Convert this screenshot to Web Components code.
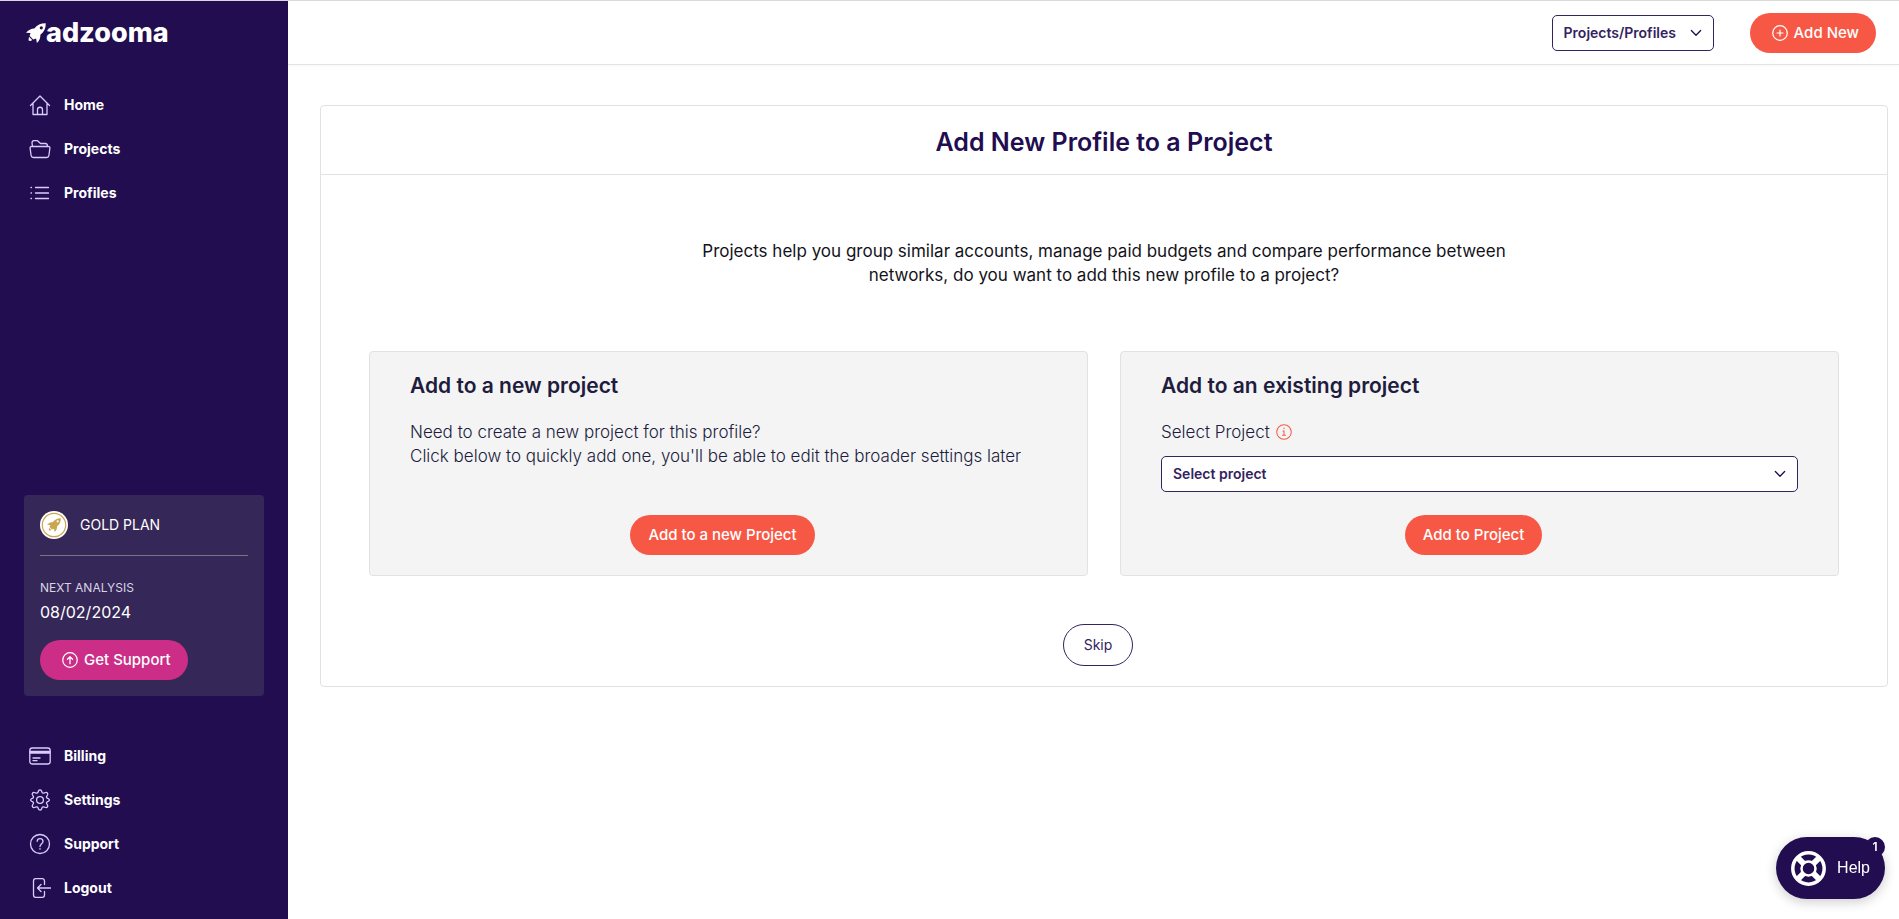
<!DOCTYPE html>
<html lang="en">
<head>
<meta charset="utf-8">
<meta name="viewport" content="width=device-width, initial-scale=1">
<title>Adzooma</title>
<style>
  :root {
    --navy: #210d4f;
    --ink: #33235e;
    --coral: #f75845;
    --pink: #cc2e87;
    --line: #e2e2e5;
  }
  body {
    margin: 0;
    background: #fff;
    color: #211c3d;
    font: 400 16px/24px Inter, "Open Sans", sans-serif;
  }
</style>
</head>
<body>
<app-shell>
  <side-bar slot="side">
    <nav-item icon="home" href="#home">Home</nav-item>
    <nav-item icon="folder" href="#projects">Projects</nav-item>
    <nav-item icon="list" href="#profiles">Profiles</nav-item>
    <plan-card slot="plan" plan="GOLD PLAN" date="08/02/2024"></plan-card>
    <nav-item slot="foot" icon="card" href="#billing">Billing</nav-item>
    <nav-item slot="foot" icon="gear" href="#settings">Settings</nav-item>
    <nav-item slot="foot" icon="question" href="#support">Support</nav-item>
    <nav-item slot="foot" icon="logout" href="#logout">Logout</nav-item>
  </side-bar>
  <top-bar slot="top">
    <select-field name="Projects or profiles" value="Projects/Profiles"></select-field>
    <pill-button icon="plus">Add New</pill-button>
  </top-bar>
  <profile-panel heading="Add New Profile to a Project">
    <span slot="intro">Projects help you group similar accounts, manage paid budgets and compare performance between networks, do you want to add this new profile to a project?</span>
    <option-card heading="Add to a new project">
      <span>Need to create a new project for this profile?<br>Click below to quickly add one, you'll be able to edit the broader settings later</span>
      <pill-button slot="action">Add to a new Project</pill-button>
    </option-card>
    <option-card heading="Add to an existing project">
      <select-field label="Select Project" value="Select project"></select-field>
      <pill-button slot="action">Add to Project</pill-button>
    </option-card>
    <pill-button slot="skip" variant="outline">Skip</pill-button>
  </profile-panel>
</app-shell>
<help-launcher count="1">Help</help-launcher>

<script>
const ROCKET = '<path fill-rule="evenodd" d="M19.800.2C14.500.2 11 2 8.300 5.600 5 5.800 2.300 7.200 0 9.800l4.600.1-1 2.900 3.600 3.600 2.900-1 .8 4.600c2.500-2.400 3.700-5 3.500-8.300C18 9 19.800 5.500 19.800.2ZM15.300 3.200a1.600 1.600 0 1 0 0 3.200 1.600 1.600 0 0 0 0-3.200ZM3 13.800 6.200 17l-1.600 1-2.100-.5Z"/>';

const ICONS = {
  home: '<path d="M1.500 11.500 11 2l9.500 9.500M4 9.500V20.500h4.500v-5c0-3 5-3 5 0v5H18V9.500M8.500 20.500h5"/>',
  folder: '<path d="M3.500 8.500 3 5c0-1.500.8-2.300 2-2.300h3.500l3 2.800h5c1.500 0 2 .8 2 3M2.500 8.500h17c.9 0 1.500.6 1.400 1.500l-1 7.500c-.2 1.300-1 2-2.300 2H4.400c-1.300 0-2.100-.7-2.300-2L1.100 10c-.1-.9.500-1.500 1.400-1.500Z"/>',
  list: '<path d="M6.500 5.500h13M6.500 11h13M6.500 16.500h13M2 5.500h.5M2 11h.5M2 16.500h.5"/>',
  card: '<rect x=".8" y="3" width="20.400" height="16" rx="2.500"/><path d="M1 6.500h20M1 8h20M4 13h7M4 15.700h4"/>',
  gear: '<circle cx="11" cy="11" r="3.400"/><path d="m9.300 2.600.3-.9c.4-1 2.400-1 2.800 0l.6 1.600c.3.700 1 1 1.700.8l1.900-.6c1.400-.4 2.600 1 2 2.200l-1 1.800c-.3.600 0 1.300.6 1.600l1.300.7c1.100.6 1.100 1.800 0 2.400l-1.300.7c-.6.300-.9 1-.6 1.600l1 1.800c.6 1.200-.6 2.600-2 2.200l-1.900-.6c-.7-.2-1.400.100-1.700.8l-.6 1.600c-.4 1-2.400 1-2.800 0L9 18.700c-.3-.7-1-1-1.700-.8l-1.900.6c-1.400.4-2.600-1-2-2.200l1-1.800c.3-.6 0-1.300-.6-1.600l-1.300-.7c-1.100-.6-1.100-1.800 0-2.400l1.300-.7c.6-.3.900-1 .6-1.600l-1-1.800c-.6-1.200.6-2.600 2-2.200l1.900.6c.7.2 1.400-.100 1.700-.8Z"/>',
  question: '<circle cx="11" cy="11" r="9.500"/><path d="M8.200 8.300c.2-3.600 5.800-3.300 5.800.1 0 2.200-3 2.400-3 5.100M11 15.600v.6"/>',
  logout: '<path d="M15.500 7.500V4c0-1.400-.8-2.300-2.200-2.300H6.700C5.300 1.700 4.500 2.600 4.500 4v14c0 1.400.8 2.300 2.200 2.300h6.600c1.400 0 2.200-.9 2.200-2.300v-3.500M21.500 11H8.500M12 7.500 8.500 11l3.500 3.500"/>',
  plus: '<circle cx="11" cy="11" r="10"/><path d="M11 7v8M7 11h8"/>',
  up: '<circle cx="11" cy="11" r="10"/><path d="M11 16V6.500M7.500 10 11 6.500l3.500 3.500"/>',
  info: '<circle cx="11" cy="11" r="10"/><path d="M9.500 9.500H11V15M9 15.500h4M11 5.500v1"/>',
  chevron: '<path d="m2.500 6.500 8.500 8.500 8.500-8.500"/>'
};

const define = (name, render) => customElements.define(name, class extends HTMLElement {
  connectedCallback() {
    if (this.shadowRoot) return;
    const template = document.createElement('template');
    template.innerHTML = render(this);
    this.attachShadow({ mode: 'open' }).append(template.content.cloneNode(true));
  }
});
const attr = (el, name) => el.getAttribute(name) || '';

define('ui-icon', el => `
  <style>
    :host { display: inline-flex; width: 22px; height: 22px; flex: none; }
    svg { width: 100%; height: 100%; fill: none; stroke: currentColor; stroke-width: var(--stroke, 1.3);
          stroke-linecap: round; stroke-linejoin: round; }
  </style>
  <svg viewBox="0 0 22 22" aria-hidden="true">${ICONS[attr(el, 'name')]}</svg>`);

define('app-shell', () => `
  <style>
    :host { display: grid; grid-template-columns: 288px minmax(0, 1fr); min-height: 100vh;
            box-sizing: border-box; border-top: 1px solid #dadada; }
    .page { display: flex; flex-direction: column; }
    main { padding: 40px 11px 40px 32px; }
  </style>
  <slot name="side"></slot>
  <div class="page"><slot name="top"></slot><main><slot></slot></main></div>`);

define('side-bar', () => `
  <style>
    :host { display: flex; flex-direction: column; background: var(--navy); color: #fff; padding-bottom: 9px; }
    .logo { display: flex; align-items: center; height: 64px; padding-left: 26px; color: #fff;
            text-decoration: none; font-size: 27px; font-weight: 800; }
    .logo svg { width: 20px; height: 20px; fill: #fff; }
    nav { display: flex; flex-direction: column; }
    .main { margin-top: 18px; }
    .plan { margin: auto 24px 38px; padding-top: 24px; }
  </style>
  <a class="logo" href="#home"><svg viewBox="0 0 20 20" aria-hidden="true">${ROCKET}</svg><span>adzooma</span></a>
  <nav class="main" aria-label="Main"><slot></slot></nav>
  <div class="plan"><slot name="plan"></slot></div>
  <nav aria-label="Account"><slot name="foot"></slot></nav>`);

define('nav-item', el => `
  <style>
    :host { display: block; }
    a { display: flex; align-items: center; gap: 13px; height: 44px; padding-left: 29px;
        color: #fff; text-decoration: none; font-size: 14px; font-weight: 700; }
    ui-icon { color: #d9ccff; }
  </style>
  <a href="${attr(el, 'href')}"><ui-icon name="${attr(el, 'icon')}"></ui-icon><slot></slot></a>`);

define('plan-card', el => `
  <style>
    :host { display: block; padding: 16px; border-radius: 4px; background: #362759; color: #fff; }
    .head { display: flex; align-items: center; gap: 12px; height: 28px; padding-bottom: 16px;
            border-bottom: 1px solid #797585; font-size: 14px; }
    .head svg { width: 28px; height: 28px; }
    .label { margin-top: 20px; font-size: 12px; color: #d9d5e2; }
    .date { margin-bottom: 16px; }
  </style>
  <div class="head">
    <svg viewBox="0 0 28 28" aria-hidden="true"><circle cx="14" cy="14" r="14" fill="#fff"/>
      <circle cx="14" cy="14" r="11.700" fill="none" stroke="#c9a64f" stroke-width="1.200"/>
      <g fill="#c9a64f" transform="translate(7 7) scale(.7)">${ROCKET}</g></svg>
    <span>${attr(el, 'plan')}</span>
  </div>
  <div class="label">NEXT ANALYSIS</div>
  <div class="date">${attr(el, 'date')}</div>
  <pill-button variant="pink" icon="up">Get Support</pill-button>`);

define('pill-button', el => `
  <style>
    :host { display: inline-flex; }
    button { display: inline-flex; align-items: center; gap: 6px; height: 40px; padding: 0 18px;
             border: 0; border-radius: 21px; background: var(--coral); color: #fff;
             font: inherit; font-size: 15px; font-weight: 500; white-space: nowrap; cursor: pointer; }
    button.icon { padding-left: 22px; padding-right: 17px; }
    button.pink { background: var(--pink); }
    button.outline { height: 42px; padding: 0 20px; border: 1px solid var(--ink); background: #fff;
                     color: var(--ink); font-size: 14px; font-weight: 400; }
    ui-icon { width: 16px; height: 16px; --stroke: 1.7; }
  </style>
  <button type="button" class="${attr(el, 'variant')} ${el.hasAttribute('icon') ? 'icon' : ''}">
    ${el.hasAttribute('icon') ? `<ui-icon name="${attr(el, 'icon')}"></ui-icon>` : ''}<slot></slot></button>`);

define('select-field', el => `
  <style>
    :host { display: block; }
    .label { display: flex; align-items: center; gap: 6px; margin-bottom: 12px; }
    .label ui-icon { width: 16px; height: 16px; color: var(--coral); --stroke: 1.4; }
    .box { display: grid; align-items: center; }
    .box > * { grid-area: 1 / 1; }
    .box ui-icon { justify-self: end; width: 12px; height: 12px; margin-right: 12px; pointer-events: none;
                   color: var(--navy); --stroke: 2.4; }
    select { appearance: none; width: 100%; height: 36px; padding: 0 36px 0 11px; border: 1px solid var(--ink);
             border-radius: 5px; background: #fff; color: var(--ink); font: inherit; font-size: 14px; font-weight: 600; }
  </style>
  ${el.hasAttribute('label') ? `<div class="label"><label for="field">${attr(el, 'label')}</label><ui-icon name="info"></ui-icon></div>` : ''}
  <div class="box">
    <select id="field" ${el.hasAttribute('name') ? `aria-label="${attr(el, 'name')}"` : ''}><option>${attr(el, 'value')}</option></select>
    <ui-icon name="chevron"></ui-icon>
  </div>`);

define('top-bar', () => `
  <style>
    :host { display: flex; align-items: center; justify-content: flex-end; gap: 36px; height: 63px;
            padding-right: 23px; border-bottom: 1px solid #e3e2ea; box-shadow: 0 1px 3px #0000000a; }
  </style>
  <slot></slot>`);

define('profile-panel', el => `
  <style>
    :host { display: block; border: 1px solid var(--line); border-radius: 4px; }
    h1 { margin: 0; padding: 18px 16px 14px; border-bottom: 1px solid var(--line); color: var(--navy);
         font-size: 25px; line-height: 36px; font-weight: 600; text-align: center; }
    .body { padding: 64px 48px 20px; }
    p { max-width: 820px; margin: 0 auto 64px; text-align: center; color: #14131a; font-size: 17px; }
    .options { display: grid; grid-template-columns: 1fr 1fr; gap: 32px; }
    .skip { display: flex; justify-content: center; margin-top: 48px; padding-right: 12px; }
  </style>
  <h1>${attr(el, 'heading')}</h1>
  <div class="body">
    <p><slot name="intro"></slot></p>
    <div class="options"><slot></slot></div>
    <div class="skip"><slot name="skip"></slot></div>
  </div>`);

define('option-card', el => `
  <style>
    :host { display: flex; flex-direction: column; box-sizing: border-box; min-height: 225px;
            padding: 19px 40px 20px; border: 1px solid var(--line); border-radius: 4px; background: #f4f4f4;
            font-size: 17px; font-weight: 300; }
    h2 { margin: 0 0 19px; font-size: 21px; line-height: 30px; font-weight: 600; }
    .action { display: flex; justify-content: center; margin-top: auto; padding: 20px 12px 0 0; }
  </style>
  <h2>${attr(el, 'heading')}</h2>
  <slot></slot>
  <div class="action"><slot name="action"></slot></div>`);

define('help-launcher', el => `
  <style>
    :host { position: fixed; right: 14px; bottom: 20px; }
    button { display: flex; align-items: center; gap: 11px; height: 62px; padding: 0 15px; border: 0;
             border-radius: 31px; background: var(--navy); color: #fff; box-shadow: 0 3px 12px #00000033;
             font: 16px/24px "Liberation Sans", Arial, sans-serif; cursor: pointer; }
    svg { width: 35px; height: 35px; }
    .badge { position: absolute; top: 0; right: 0; width: 20px; height: 20px; border-radius: 10px;
             background: var(--navy); color: #fff; font: 600 12px/20px Inter, sans-serif; text-align: center; }
  </style>
  <button type="button">
    <svg viewBox="0 0 35 35" fill="none" stroke="#fff" aria-hidden="true">
      <circle cx="17.500" cy="17.500" r="15.700" stroke-width="3.500"/>
      <circle cx="17.500" cy="17.500" r="7" stroke-width="2.500"/>
      <path stroke-width="6" d="m6.500 6.500 6 6M22.500 22.500l6 6M28.500 6.500l-6 6M12.500 22.500l-6 6"/></svg>
    <slot></slot>
  </button>
  <span class="badge">${attr(el, 'count')}</span>`);
</script>
</body>
</html>
